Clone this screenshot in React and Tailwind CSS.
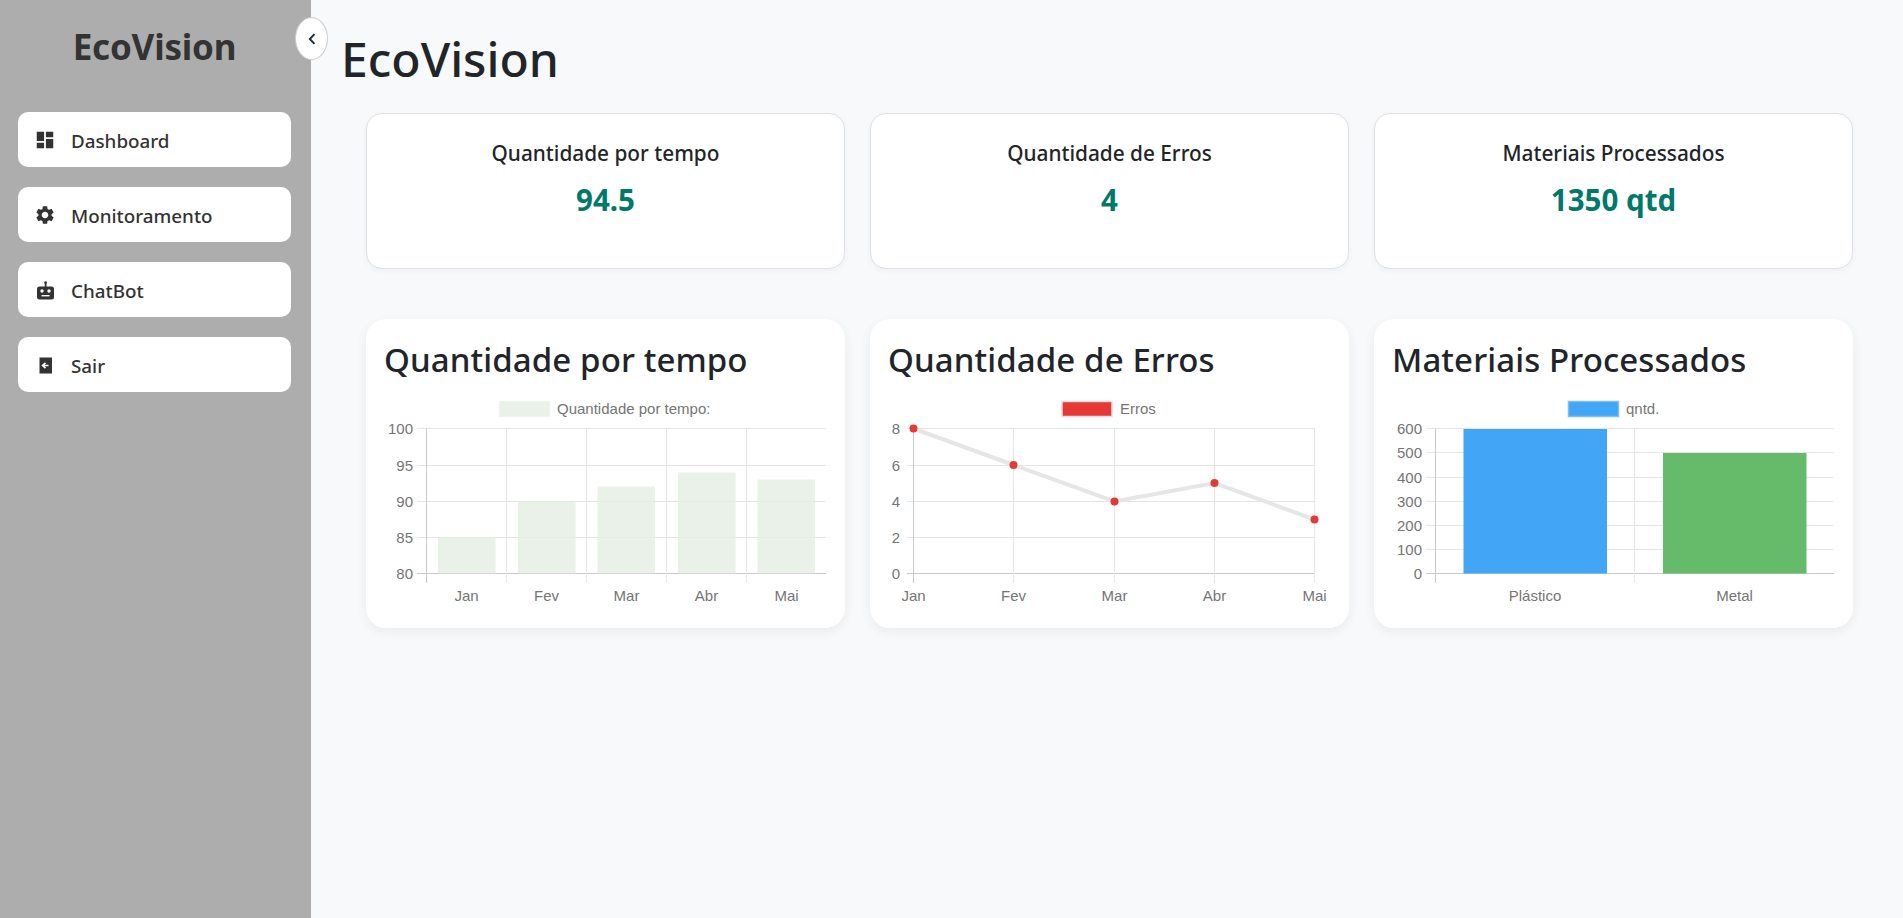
import React from "react";
import { MdDashboard, MdSettings } from "react-icons/md";

const font = "font-['Noto_Sans','Open_Sans',sans-serif]";

const ExitIcon = ({ size }) => (
  <svg width={size} height={size} viewBox="0 0 22 22">
    <rect x="5.5" y="3.5" width="12.5" height="16" fill="currentColor" />
    <path d="M14.5 11.5H9M11.5 8.8L8.6 11.5L11.5 14.2" fill="none" stroke="#ffffff" strokeWidth="1.7" />
  </svg>
);

const BotIcon = ({ size }) => (
  <svg width={size} height={size} viewBox="0 0 22 22">
    <rect x="10.7" y="3.5" width="1.8" height="5" fill="currentColor" />
    <circle cx="11.6" cy="3.6" r="1.3" fill="currentColor" />
    <rect x="3" y="7.5" width="17" height="13" rx="2.5" fill="currentColor" />
    <circle cx="8" cy="12" r="1.7" fill="#ffffff" />
    <circle cx="15" cy="12" r="1.7" fill="#ffffff" />
    <rect x="7.5" y="16" width="8" height="1.4" fill="#ffffff" />
  </svg>
);

const navItems = [
  { label: "Dashboard", icon: MdDashboard },
  { label: "Monitoramento", icon: MdSettings },
  { label: "ChatBot", icon: BotIcon },
  { label: "Sair", icon: ExitIcon },
];

const stats = [
  { label: "Quantidade por tempo", value: "94.5" },
  { label: "Quantidade de Erros", value: "4" },
  { label: "Materiais Processados", value: "1350 qtd" },
];

const GRID = "#e5e5e5";
const AXIS = "#c9c9c9";
const TEXT = "#757575";

const Label = ({ x, y, anchor = "middle", children }) => (
  <text x={x} y={y} textAnchor={anchor} fontSize="15" fill={TEXT} fontFamily="'Liberation Sans', Arial, sans-serif">
    {children}
  </text>
);

const Axes = ({ xs, ys, yLabels, labelRight, right, xLabels, labelXs, tickLeft }) => (
  <>
    {ys.map((y, i) => (
      <g key={y}>
        <line x1={tickLeft} x2={right} y1={y} y2={y} stroke={i === ys.length - 1 ? AXIS : GRID} />
        <Label x={labelRight} y={y + 5} anchor="end">{yLabels[i]}</Label>
      </g>
    ))}
    {xs.map((x, i) => (
      <line key={x} x1={x} x2={x} y1={29.5} y2={184} stroke={i === 0 ? AXIS : GRID} />
    ))}
    {xLabels.map((l, i) => (
      <Label key={l} x={labelXs[i]} y={202}>{l}</Label>
    ))}
  </>
);

const Legend = ({ x, textX, fill, border, children }) => (
  <>
    <rect x={x} y={2.5} width={50} height={15} fill={fill} stroke={border} strokeWidth="1.5" />
    <Label x={textX} y={15} anchor="start">{children}</Label>
  </>
);

const YS5 = [29.5, 66.5, 102.5, 138.5, 174.5];

const TimeChart = () => {
  const bars = [
    [53, 138.5],
    [133, 102.5],
    [212.5, 87.5],
    [293, 73.5],
    [372.5, 80.5],
  ];
  return (
    <svg viewBox="0 0 441 220" className="block w-[441px] h-[220px]">
      <Legend x={114.5} textX={172} fill="#e9f1e9" border="#eef4ee">Quantidade por tempo:</Legend>
      <Axes
        xs={[41.5, 121.5, 201.5, 281.5, 361.5]}
        ys={YS5}
        yLabels={["100", "95", "90", "85", "80"]}
        tickLeft={32}
        right={441}
        labelRight={28}
        xLabels={["Jan", "Fev", "Mar", "Abr", "Mai"]}
        labelXs={[81.5, 161.5, 241.5, 321.5, 401.5]}
      />
      {bars.map(([x, y]) => (
        <rect key={x} x={x} y={y} width={57.5} height={174.5 - y} fill="#e3ede3" fillOpacity="0.8" />
      ))}
    </svg>
  );
};

const ErrorsChart = () => {
  const pts = [
    [24.5, 29.5],
    [124.5, 66],
    [225.5, 102.5],
    [325.5, 84],
    [425.5, 120.5],
  ];
  return (
    <svg viewBox="0 0 441 220" className="block w-[441px] h-[220px] overflow-visible">
      <Legend x={173} textX={231} fill="#e53935" border="#ebdcdc">Erros</Legend>
      <Axes
        xs={[24.5, 124.5, 225.5, 325.5, 425.5]}
        ys={YS5}
        yLabels={["8", "6", "4", "2", "0"]}
        tickLeft={18}
        right={425.5}
        labelRight={11}
        xLabels={["Jan", "Fev", "Mar", "Abr", "Mai"]}
        labelXs={[24.5, 124.5, 225.5, 325.5, 425.5]}
      />
      <polyline points={pts.map((p) => p.join(",")).join(" ")} fill="none" stroke="#e6e6e6" strokeWidth="4" />
      {pts.map(([x, y]) => (
        <circle key={x} cx={x} cy={y} r="4" fill="#e53935" />
      ))}
    </svg>
  );
};

const MaterialsChart = () => (
  <svg viewBox="0 0 441 220" className="block w-[441px] h-[220px]">
    <Legend x={175.5} textX={233} fill="#42a5f5" border="#7cc0f8">qntd.</Legend>
    <Axes
      xs={[42.5, 241.5]}
      ys={[29.5, 53.5, 78.5, 102.5, 126.5, 150.5, 174.5]}
      yLabels={["600", "500", "400", "300", "200", "100", "0"]}
      tickLeft={33}
      right={441}
      labelRight={29}
      xLabels={["Plástico", "Metal"]}
      labelXs={[142, 341.5]}
    />
    <rect x={70.5} y={30} width={143.5} height={144.5} fill="#42a5f5" />
    <rect x={270} y={54} width={143.5} height={120.5} fill="#66bb6a" />
  </svg>
);

const charts = [
  { title: "Quantidade por tempo", chart: <TimeChart /> },
  { title: "Quantidade de Erros", chart: <ErrorsChart /> },
  { title: "Materiais Processados", chart: <MaterialsChart /> },
];

export default function App() {
  return (
    <div className={`flex h-[918px] overflow-hidden bg-[#f8f9fa] ${font}`}>
      {/* Sidebar */}
      <aside className="relative w-[311px] shrink-0 bg-[#adadad] pl-[18px] pr-[20px] pt-[23px]">
        <h2 className="h-[48px] text-center text-[35px] leading-[48px] font-bold tracking-[-0.2px] text-[#333333]">EcoVision</h2>
        <nav className="mt-[41px] flex flex-col gap-[20px]">
          {navItems.map(({ label, icon: Icon }) => (
            <a key={label} className="flex h-[55px] items-center gap-[15px] rounded-[10px] bg-white pl-[16px] text-[18.8px] leading-[28px] font-medium text-[#333333]">
              <Icon size={22} />
              <span className="pt-[2px]">{label}</span>
            </a>
          ))}
        </nav>
        <button className="absolute right-[-17px] top-[17px] flex h-[43px] w-[33px] items-center justify-center rounded-[50%] border border-[#cccccc] bg-white">
          <svg width="8" height="12" viewBox="0 0 8 12">
            <path d="M6.5 1.2L1.8 6L6.5 10.8" fill="none" stroke="#1e2a3a" strokeWidth="1.9" />
          </svg>
        </button>
      </aside>

      {/* Main */}
      <main className="min-w-0 flex-1 px-[30px] pt-[29px]">
        <h1 className="h-[60px] text-[48px] leading-[60px] font-medium text-[#212529]">EcoVision</h1>

        <div className="ml-[25px] mr-[20px] mt-[24px] grid grid-cols-3 gap-[25px]">
          {stats.map((s) => (
            <div key={s.label} className="h-[156px] rounded-[16px] border border-[#dee2e6] bg-white pt-[24px] text-center shadow-[0_2px_6px_rgba(0,0,0,0.04)]">
              <h3 className="text-[20.8px] leading-[30px] font-medium text-[#212529]">{s.label}</h3>
              <p className="mt-[13px] text-[29.5px] leading-[38px] font-bold text-[#00796b]">{s.value}</p>
            </div>
          ))}
        </div>

        <div className="ml-[25px] mr-[20px] mt-[50px] grid grid-cols-3 gap-[25px]">
          {charts.map((c) => (
            <div key={c.title} className="h-[309px] rounded-[20px] bg-white px-[19px] pt-[18px] shadow-[0_4px_12px_rgba(0,0,0,0.06)]">
              <h2 className="-ml-[1px] h-[62px] text-[33px] leading-[46px] font-medium tracking-[0.1px] whitespace-nowrap text-[#212529]">{c.title}</h2>
              {c.chart}
            </div>
          ))}
        </div>
      </main>
    </div>
  );
}
